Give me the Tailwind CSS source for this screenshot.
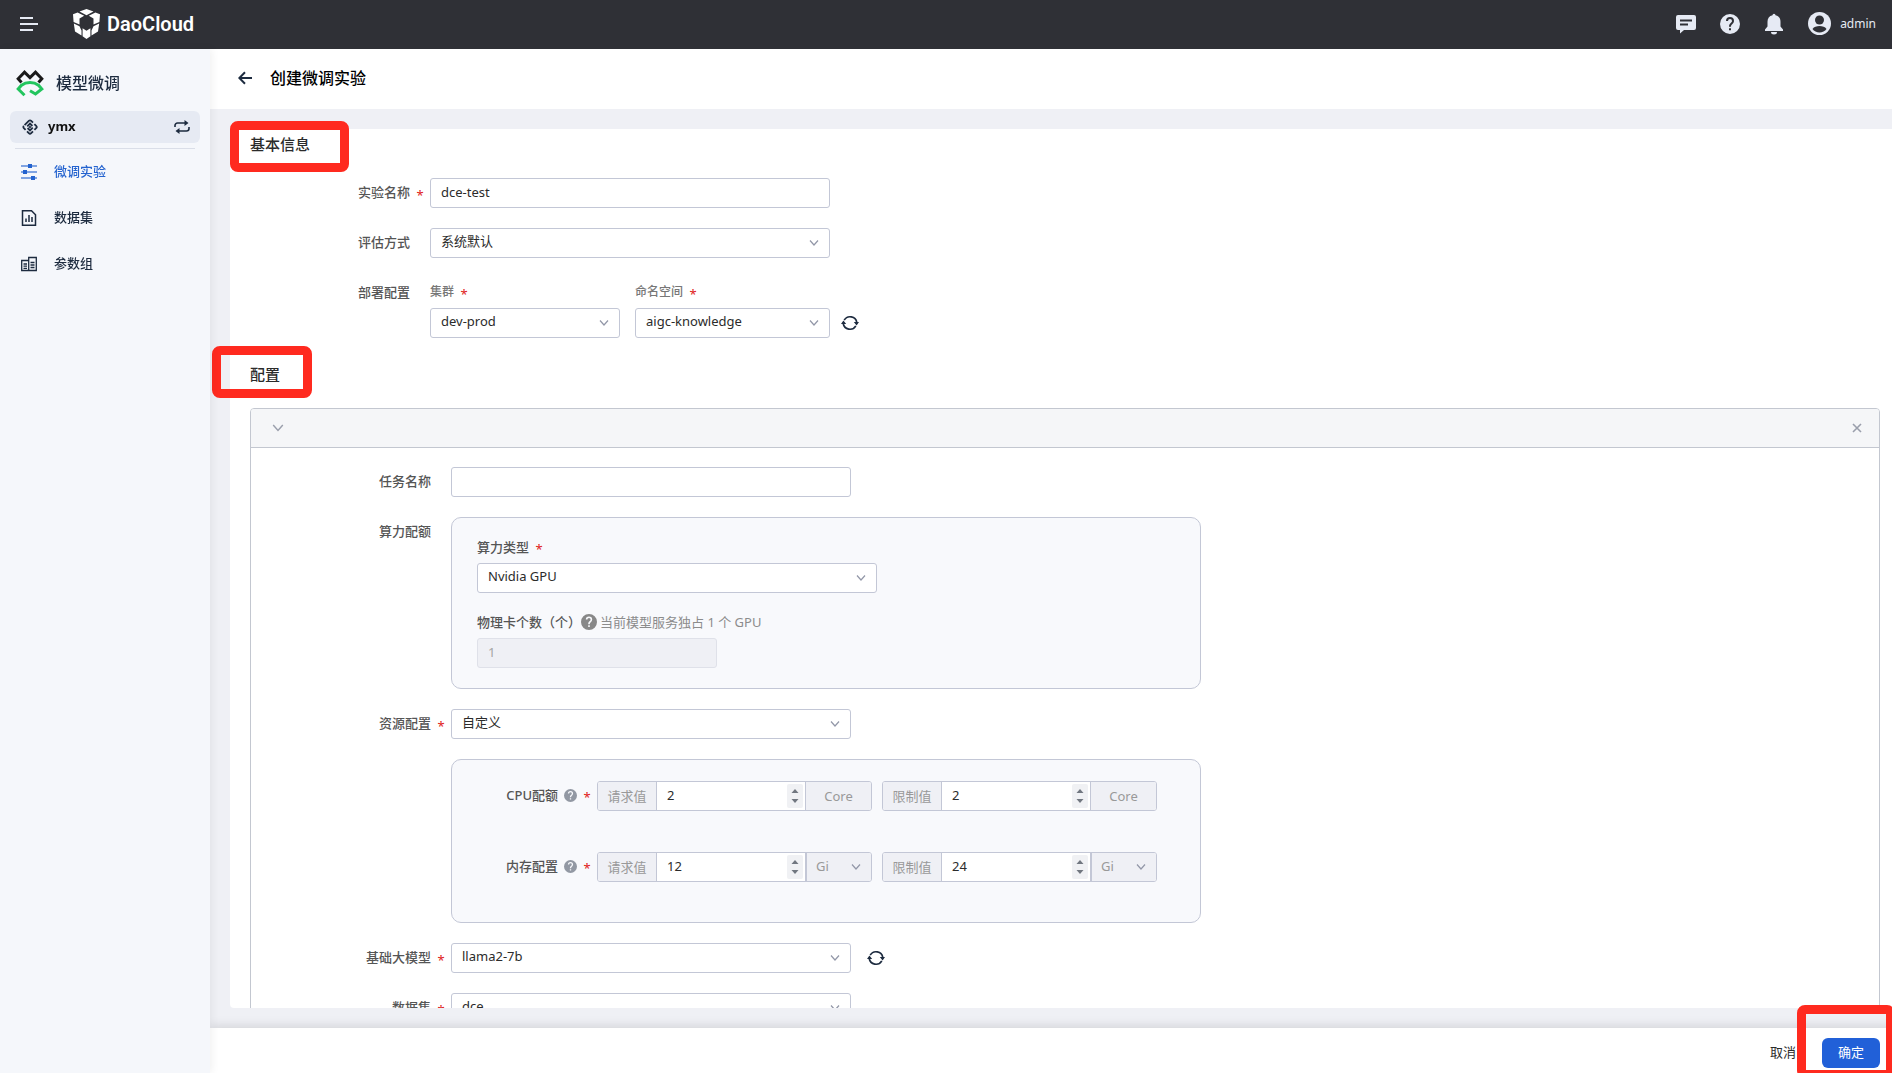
<!DOCTYPE html>
<html lang="zh-CN">
<head>
<meta charset="utf-8">
<title>创建微调实验 - DaoCloud</title>
<script src="https://cdn.jsdelivr.net/npm/@tailwindcss/browser@4"></script>
</head>
<body class="flex h-screen flex-col overflow-hidden bg-[#eff0f5] font-['Noto_Sans','Noto_Sans_CJK_SC',sans-serif] text-[13px] text-[#2b2b2b]">

<svg class="hidden" aria-hidden="true">
  <symbol id="chevron" viewBox="0 0 10 10"><path d="M1 2.500 5 7l4-4.500" fill="none" stroke="currentColor" stroke-width="1.200"/></symbol>
  <symbol id="help" viewBox="0 0 20 20"><path fill-rule="evenodd" fill="currentColor" d="M10 0a10 10 0 1 0 0 20 10 10 0 0 0 0-20Zm1 16.200H9v-2h2v2Zm2.100-6.900-.9.9c-.8.800-1.200 1.300-1.200 2.600H9v-.5c0-1.100.4-2 1.200-2.800l1.200-1.200c.4-.4.600-.8.600-1.300a2 2 0 0 0-4 0H6a4 4 0 1 1 8 0c0 .9-.4 1.700-.9 2.300Z"/></symbol>
  <symbol id="refresh" viewBox="0 0 18 18"><g fill="none" stroke="currentColor" stroke-width="1.600"><path d="M3.200 6.200A6.800 6.800 0 0 1 15.800 8.500"/><path d="M14.800 11.800A6.800 6.800 0 0 1 2.200 9.500"/></g><path fill="currentColor" d="m12.800 8 5.200 0-2.400 3.600zM0 10l2.400-3.600L5.200 10z"/></symbol>
  <symbol id="up" viewBox="0 0 8 4"><path d="M4 0 7.500 4h-7z" fill="currentColor"/></symbol>
  <symbol id="down" viewBox="0 0 8 4"><path d="M4 4 .5 0h7z" fill="currentColor"/></symbol>
</svg>

<header class="flex h-[49px] shrink-0 items-center bg-[#2f3036] pr-4 pb-[2px] pl-5 text-[#e6eaf4]">
  <button aria-label="菜单" class="mr-[35px]"><svg class="block h-[18px] w-[18px]" viewBox="0 0 18 18" stroke="currentColor" stroke-width="2"><path d="M0 3h13M0 9h18M0 15h13"/></svg></button>
  <a href="#" class="flex items-center gap-[7px] text-white">
    <svg class="h-[30px] w-[27px]" viewBox="0 0 27 30" fill="currentColor"><path d="M13.500 0 20.500 2.600 13.500 6.200 6.500 2.600zM4.600 3.400l6.600 3.400-4.700 2.700v6L.6 13 0 5.200zM22.400 3.400l-6.600 3.400 4.700 2.700v6l5.900-2.500.6-7.800zM.8 14.500l5.700 2.700 2 4.300v5L2 22.500zM26.200 14.500l-5.700 2.700-2 4.300v5l6.500-4zM9.600 19.200l3.900 2.600 3.900-2.600v8L13.500 30l-3.900-2.800z"/></svg>
    <span class="font-['Roboto',sans-serif] text-[20px] leading-7 font-semibold">DaoCloud</span>
  </a>
  <div class="ml-auto flex items-center gap-6">
    <button aria-label="消息"><svg class="block h-5 w-5" viewBox="0 0 20 20"><path fill="currentColor" d="M2 1h16a2 2 0 0 1 2 2v11a2 2 0 0 1-2 2H8l-4 3.500V16H2a2 2 0 0 1-2-2V3a2 2 0 0 1 2-2Z"/><path d="M4 6.500h12M4 10.500h8" stroke="#2f3036" stroke-width="2"/></svg></button>
    <button aria-label="帮助"><svg class="block h-5 w-5"><use href="#help"/></svg></button>
    <button aria-label="通知"><svg class="block h-[22px] w-5" viewBox="0 0 20 22" fill="currentColor"><path d="M8.500 2.200a1.500 1.500 0 0 1 3 0c3.300.7 5 3.300 5 6.600v4.700l2.500 3V18H1v-1.500l2.500-3V8.800c0-3.300 1.700-5.900 5-6.600zM7 19h6a3 2.500 0 0 1-6 0z"/></svg></button>
    <button class="flex items-center gap-[9px] text-[12px]"><svg class="h-[23px] w-[23px]" viewBox="0 0 23 23"><circle cx="11.500" cy="11.500" r="11.500" fill="currentColor"/><circle cx="11.500" cy="8" r="4.500" fill="#2f3036"/><path d="M4.500 17c1.500-2.200 4-3 7-3s5.500.8 7 3c-1.500 2.300-4.200 3.500-7 3.500s-5.500-1.200-7-3.500z" fill="#2f3036"/></svg>admin</button>
  </div>
</header>

<div class="flex min-h-0 flex-1">
  <aside class="z-10 w-[210px] shrink-0 bg-[#f5f7fb] px-[10px] pt-5 text-[#1d2b3f] shadow-[2px_0_8px_rgba(0,0,0,0.06)]">
    <div class="flex h-7 items-center gap-3 pl-[6px] text-[16px] font-medium">
      <svg class="h-7 w-7" viewBox="0 0 28 28" fill="none" stroke-width="3"><path d="M5.500 13.500 2.200 9.800 8.500 3.200 14 8.600 19.500 3.200l6.300 6.600-3.300 3.700" stroke="#1a1a1a"/><path d="M8.500 26.200 2.200 20l3.300-3.800c4.800-3.600 12.200-3.600 17 0l3.300 3.800-6.300 5-5.500-3.200" stroke="#22c55e"/></svg>
      模型微调
    </div>
    <button class="mt-[14px] flex h-8 w-full items-center rounded-md bg-[#e6eaf3] px-[10px]">
      <svg class="mr-[10px] ml-[2px] h-4 w-4" viewBox="0 0 16 16" fill="none" stroke="currentColor" stroke-width="1.800"><g transform="rotate(45 8 8)"><path d="M2.800 10.500V4.500a1.700 1.700 0 0 1 1.700-1.700H7M5.500 2.800M9 2.800h2.500a1.700 1.700 0 0 1 1.700 1.700V7M13.200 9v2.500a1.700 1.700 0 0 1-1.700 1.700H9M7 13.200H4.500a1.700 1.700 0 0 1-1.700-1.700M5.600 9.500V5.600H9M10.400 6.500v3.900H7"/><path d="M7 7h2v2H7z" fill="currentColor" stroke="none"/></g></svg>
      <span class="text-[13px] font-bold text-[#111]">ymx</span>
      <svg class="ml-auto h-4 w-4" viewBox="0 0 16 16"><path d="M1 8V6.500a2.500 2.500 0 0 1 2.500-2.500H12M15 8v1.500a2.500 2.500 0 0 1-2.500 2.500H4" fill="none" stroke="currentColor" stroke-width="1.600"/><path d="m10.500 1 4 3-4 3zM5.500 9l-4 3 4 3z" fill="currentColor"/></svg>
    </button>
    <hr class="mx-[5px] mt-[5px] border-[#dadee8]">
    <nav class="flex flex-col font-medium">
      <a href="#" class="flex h-[46px] items-center gap-[17px] pl-[11px] text-[#2463cf]"><svg class="h-4 w-4" viewBox="0 0 16 16" fill="currentColor"><path opacity=".75" d="M0 1.200h16v1.600H0zM0 7.200h16v1.600H0zM0 13.200h16v1.600H0z"/><path d="M7 0h4v4H7zM2 6h4v4H2zM10 12h4v4h-4z"/></svg>微调实验</a>
      <a href="#" class="flex h-[46px] items-center gap-[17px] pl-[11px]"><svg class="h-4 w-4" viewBox="0 0 16 16" fill="none" stroke="currentColor" stroke-width="1.500"><path d="M1.500.8h9l4 4v10.400h-13zM5 8.500V12M8 5v7M11 7v5"/></svg>数据集</a>
      <a href="#" class="flex h-[46px] items-center gap-[17px] pl-[11px]"><svg class="h-4 w-4" viewBox="0 0 16 16" fill="none" stroke="currentColor" stroke-width="1.300"><path d="M.7 4.500h7v10h-7zM7.700 1.500h7.600v13H7.700zM2.500 8h3.500M2.500 10.200h3.500M2.500 12.300h3.500M9.500 6.500h4M9.500 9h4M9.500 11.500h4"/></svg>参数组</a>
    </nav>
  </aside>

  <main class="relative flex min-w-0 flex-1 flex-col">
    <div class="flex h-[60px] shrink-0 items-center gap-[18px] bg-white pb-[2px] pl-[28px]">
      <button aria-label="返回"><svg class="block h-[14px] w-[14px] text-[#1d2b3f]" viewBox="0 0 14 14" fill="none" stroke="currentColor" stroke-width="2"><path d="M14 7H1.500M7 1.200 1.300 7 7 12.800"/></svg></button>
      <h1 class="text-[16px] leading-6 font-medium text-black">创建微调实验</h1>
    </div>

    <form id="experiment" class="mt-5 mb-5 ml-5 min-h-0 flex-1 overflow-y-auto rounded-l-sm bg-white pt-[5px] pr-3 pl-5 [scrollbar-width:none]">
      <h2 class="text-[15px] leading-5 font-medium">基本信息</h2>
      <div class="mt-6 flex flex-col gap-5">
        <div class="flex">
          <label for="name" class="h-[30px] w-40 text-right leading-7 font-medium text-[#555]">实验名称</label>
          <span class="h-[30px] w-5 pt-[2px] text-center leading-[30px] text-[#e02020]">*</span>
          <input id="name" value="dce-test" class="h-[30px] w-[400px] rounded-[3px] border border-[#c3c7d6] bg-white px-[10px] pb-[2px]">
        </div>
        <div class="flex">
          <label for="eval" class="mr-5 h-[30px] w-40 text-right leading-7 font-medium text-[#555]">评估方式</label>
          <div class="relative">
            <select id="eval" class="block h-[30px] w-[400px] appearance-none rounded-[3px] border border-[#c3c7d6] bg-white px-[10px] pb-[2px]"><option>系统默认</option></select>
            <svg class="pointer-events-none absolute top-[10px] right-[11px] h-[10px] w-[10px] text-[#9297a8]"><use href="#chevron"/></svg>
          </div>
        </div>
        <div class="flex">
          <span class="mr-5 h-[30px] w-40 text-right leading-7 font-medium text-[#555]">部署配置</span>
          <div>
            <div class="flex h-[30px] text-[12px] leading-7 text-[#777]"><label for="cluster" class="font-medium">集群</label><span class="w-5 pt-[2px] text-center text-[13px] text-[#e02020]">*</span></div>
            <div class="relative">
              <select id="cluster" class="block h-[30px] w-[190px] appearance-none rounded-[3px] border border-[#c3c7d6] bg-white px-[10px] pb-[2px]"><option>dev-prod</option></select>
              <svg class="pointer-events-none absolute top-[10px] right-[11px] h-[10px] w-[10px] text-[#9297a8]"><use href="#chevron"/></svg>
            </div>
          </div>
          <div class="ml-[15px]">
            <div class="flex h-[30px] text-[12px] leading-7 text-[#777]"><label for="ns" class="font-medium">命名空间</label><span class="w-5 pt-[2px] text-center text-[13px] text-[#e02020]">*</span></div>
            <div class="relative">
              <select id="ns" class="block h-[30px] w-[195px] appearance-none rounded-[3px] border border-[#c3c7d6] bg-white px-[10px] pb-[2px]"><option>aigc-knowledge</option></select>
              <svg class="pointer-events-none absolute top-[10px] right-[11px] h-[10px] w-[10px] text-[#9297a8]"><use href="#chevron"/></svg>
            </div>
          </div>
          <button type="button" aria-label="刷新" class="mb-[6px] ml-[11px] self-end text-[#1d2b3f]"><svg class="block h-[18px] w-[18px]"><use href="#refresh"/></svg></button>
        </div>
      </div>

      <h2 class="mt-[26px] text-[15px] leading-5 font-medium">配置</h2>
      <section class="mt-6 rounded-[4px] border border-[#c3c7d0]">
        <div class="flex h-[39px] items-center justify-between rounded-t-[3px] border-b border-[#c3c7d0] bg-[#f5f6f8] pr-4 pl-[21px] text-[#9a9fac]">
          <button type="button" aria-label="折叠"><svg class="block h-3 w-3"><use href="#chevron"/></svg></button>
          <button type="button" aria-label="移除"><svg class="block h-3 w-3" viewBox="0 0 12 12" stroke="currentColor" stroke-width="1.600"><path d="m2 2 8 8M10 2l-8 8"/></svg></button>
        </div>
        <div class="flex flex-col gap-5 px-5 pt-[19px] pb-5">
          <div class="flex">
            <label for="task" class="mr-5 h-[30px] w-40 text-right leading-7 font-medium text-[#555]">任务名称</label>
            <input id="task" class="h-[30px] w-[400px] rounded-[3px] border border-[#c3c7d6] bg-white px-[10px] pb-[2px]">
          </div>
          <div class="flex">
            <span class="mr-5 h-[30px] w-40 text-right leading-7 font-medium text-[#555]">算力配额</span>
            <div class="w-[750px] rounded-[10px] border border-[#c3c7d6] bg-[#f8f9fc] px-[25px] pt-[15px] pb-5">
              <div class="flex h-[30px] leading-7"><label for="gpu" class="font-medium text-[#555]">算力类型</label><span class="w-5 pt-[2px] text-center text-[#e02020]">*</span></div>
              <div class="relative w-[400px]">
                <select id="gpu" class="block h-[30px] w-full appearance-none rounded-[3px] border border-[#c3c7d6] bg-white px-[10px] pb-[2px]"><option>Nvidia GPU</option></select>
                <svg class="pointer-events-none absolute top-[10px] right-[11px] h-[10px] w-[10px] text-[#9297a8]"><use href="#chevron"/></svg>
              </div>
              <div class="mt-[15px] flex h-[30px] items-center pb-[2px] leading-7"><label for="cards" class="font-medium text-[#555]">物理卡个数（个）</label><svg class="mr-[3px] h-4 w-4 text-[#888]"><use href="#help"/></svg><span class="text-[#8c8c8c]">当前模型服务独占 1 个 GPU</span></div>
              <input id="cards" value="1" disabled class="block h-[30px] w-60 rounded-[3px] border border-[#dfe1e9] bg-[#eff0f5] px-[10px] pb-[2px] text-[#a5a5a5]">
            </div>
          </div>
          <div class="flex">
            <label for="res" class="h-[30px] w-40 text-right leading-7 font-medium text-[#555]">资源配置</label>
            <span class="h-[30px] w-5 pt-[2px] text-center leading-[30px] text-[#e02020]">*</span>
            <div class="relative">
              <select id="res" class="block h-[30px] w-[400px] appearance-none rounded-[3px] border border-[#c3c7d6] bg-white px-[10px] pb-[2px]"><option>自定义</option></select>
              <svg class="pointer-events-none absolute top-[10px] right-[11px] h-[10px] w-[10px] text-[#9297a8]"><use href="#chevron"/></svg>
            </div>
          </div>
          <div class="ml-[180px] flex w-[750px] flex-col gap-[41px] rounded-[10px] border border-[#c3c7d6] bg-[#f8f9fc] pt-[21px] pb-10">
            <div class="flex h-[30px]">
              <div class="flex w-[145px] items-center justify-end pb-[2px] leading-7"><label for="cpu-req" class="font-medium text-[#555]">CPU配额</label><svg class="ml-[6px] h-[13px] w-[13px] text-[#9298a3]"><use href="#help"/></svg><span class="w-5 pt-1 text-center text-[#e02020]">*</span></div>
              <div class="flex w-[275px] overflow-hidden rounded-[3px] border border-[#c3c7d6] bg-white">
                <label for="cpu-req" class="w-[59px] border-r border-[#c3c7d6] bg-[#eff0f5] text-center leading-7 text-[#999]">请求值</label>
                <input id="cpu-req" value="2" inputmode="numeric" class="min-w-0 flex-1 px-[10px]">
                <div class="my-[2px] mr-[2px] flex w-4 flex-col items-center justify-around rounded-[2px] bg-[#f0f1f4] py-[2px] text-[#717780]"><button type="button" aria-label="增加"><svg class="block h-1 w-2"><use href="#up"/></svg></button><button type="button" aria-label="减少"><svg class="block h-1 w-2"><use href="#down"/></svg></button></div>
                <span class="w-[66px] border-l border-[#c3c7d6] bg-[#eff0f5] text-center leading-7 text-[#999]">Core</span>
              </div>
              <div class="ml-[10px] flex w-[275px] overflow-hidden rounded-[3px] border border-[#c3c7d6] bg-white">
                <label for="cpu-lim" class="w-[59px] border-r border-[#c3c7d6] bg-[#eff0f5] text-center leading-7 text-[#999]">限制值</label>
                <input id="cpu-lim" value="2" inputmode="numeric" class="min-w-0 flex-1 px-[10px]">
                <div class="my-[2px] mr-[2px] flex w-4 flex-col items-center justify-around rounded-[2px] bg-[#f0f1f4] py-[2px] text-[#717780]"><button type="button" aria-label="增加"><svg class="block h-1 w-2"><use href="#up"/></svg></button><button type="button" aria-label="减少"><svg class="block h-1 w-2"><use href="#down"/></svg></button></div>
                <span class="w-[66px] border-l border-[#c3c7d6] bg-[#eff0f5] text-center leading-7 text-[#999]">Core</span>
              </div>
            </div>
            <div class="flex h-[30px]">
              <div class="flex w-[145px] items-center justify-end pb-[2px] leading-7"><label for="mem-req" class="font-medium text-[#555]">内存配置</label><svg class="ml-[6px] h-[13px] w-[13px] text-[#9298a3]"><use href="#help"/></svg><span class="w-5 pt-1 text-center text-[#e02020]">*</span></div>
              <div class="flex w-[275px] overflow-hidden rounded-[3px] border border-[#c3c7d6] bg-white">
                <label for="mem-req" class="w-[59px] border-r border-[#c3c7d6] bg-[#eff0f5] text-center leading-7 text-[#999]">请求值</label>
                <input id="mem-req" value="12" inputmode="numeric" class="min-w-0 flex-1 px-[10px]">
                <div class="my-[2px] mr-[2px] flex w-4 flex-col items-center justify-around rounded-[2px] bg-[#f0f1f4] py-[2px] text-[#717780]"><button type="button" aria-label="增加"><svg class="block h-1 w-2"><use href="#up"/></svg></button><button type="button" aria-label="减少"><svg class="block h-1 w-2"><use href="#down"/></svg></button></div>
                <div class="relative flex w-[66px]">
                  <select aria-label="请求值单位" class="w-full appearance-none border-l-2 border-[#c3c7d6] bg-[#eff0f5] px-[9px] text-[#999]"><option>Gi</option></select>
                  <svg class="pointer-events-none absolute top-[9px] right-[10px] h-[10px] w-[10px] text-[#9297a8]"><use href="#chevron"/></svg>
                </div>
              </div>
              <div class="ml-[10px] flex w-[275px] overflow-hidden rounded-[3px] border border-[#c3c7d6] bg-white">
                <label for="mem-lim" class="w-[59px] border-r border-[#c3c7d6] bg-[#eff0f5] text-center leading-7 text-[#999]">限制值</label>
                <input id="mem-lim" value="24" inputmode="numeric" class="min-w-0 flex-1 px-[10px]">
                <div class="my-[2px] mr-[2px] flex w-4 flex-col items-center justify-around rounded-[2px] bg-[#f0f1f4] py-[2px] text-[#717780]"><button type="button" aria-label="增加"><svg class="block h-1 w-2"><use href="#up"/></svg></button><button type="button" aria-label="减少"><svg class="block h-1 w-2"><use href="#down"/></svg></button></div>
                <div class="relative flex w-[66px]">
                  <select aria-label="限制值单位" class="w-full appearance-none border-l-2 border-[#c3c7d6] bg-[#eff0f5] px-[9px] text-[#999]"><option>Gi</option></select>
                  <svg class="pointer-events-none absolute top-[9px] right-[10px] h-[10px] w-[10px] text-[#9297a8]"><use href="#chevron"/></svg>
                </div>
              </div>
            </div>
          </div>
          <div class="flex">
            <label for="model" class="h-[30px] w-40 text-right leading-7 font-medium text-[#555]">基础大模型</label>
            <span class="h-[30px] w-5 pt-[2px] text-center leading-[30px] text-[#e02020]">*</span>
            <div class="relative">
              <select id="model" class="block h-[30px] w-[400px] appearance-none rounded-[3px] border border-[#c3c7d6] bg-white px-[10px] pb-[2px]"><option>llama2-7b</option></select>
              <svg class="pointer-events-none absolute top-[10px] right-[11px] h-[10px] w-[10px] text-[#9297a8]"><use href="#chevron"/></svg>
            </div>
            <button type="button" aria-label="刷新" class="ml-4 text-[#1d2b3f]"><svg class="block h-[18px] w-[18px]"><use href="#refresh"/></svg></button>
          </div>
          <div class="flex">
            <label for="data" class="h-[30px] w-40 text-right leading-7 font-medium text-[#555]">数据集</label>
            <span class="h-[30px] w-5 pt-[2px] text-center leading-[30px] text-[#e02020]">*</span>
            <div class="relative">
              <select id="data" class="block h-[30px] w-[400px] appearance-none rounded-[3px] border border-[#c3c7d6] bg-white px-[10px] pb-[2px]"><option>dce</option></select>
              <svg class="pointer-events-none absolute top-[10px] right-[11px] h-[10px] w-[10px] text-[#9297a8]"><use href="#chevron"/></svg>
            </div>
          </div>
        </div>
      </section>
    </form>

    <footer class="flex h-[45px] shrink-0 items-start justify-end gap-[26px] bg-white pt-[10px] pr-3 shadow-[0_-2px_10px_rgba(0,0,0,0.12)]">
      <button type="button" class="h-[30px]">取消</button>
      <button type="submit" form="experiment" class="h-[30px] w-[58px] rounded-md bg-[#2160d8] text-white">确定</button>
    </footer>

    <div class="pointer-events-none absolute top-[72px] left-5 h-[51px] w-[119px] rounded-lg border-[9px] border-[#ff2a1f]"></div>
    <div class="pointer-events-none absolute top-[297px] left-[2px] h-[52px] w-[100px] rounded-lg border-[9px] border-[#ff2a1f]"></div>
    <div class="pointer-events-none absolute right-[-3px] bottom-[-6px] h-[74px] w-[98px] rounded-lg border-[9px] border-[#ff2a1f]"></div>
  </main>
</div>
</body>
</html>
